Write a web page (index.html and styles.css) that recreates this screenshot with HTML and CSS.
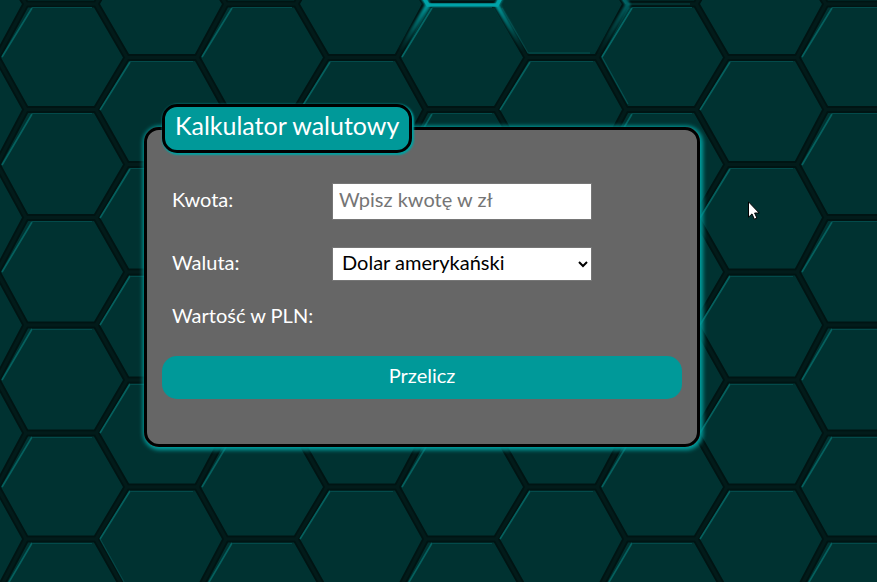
FILE: index.html
```
<!DOCTYPE html>
<html lang="pl">
<head>
<meta charset="utf-8">
<title>Kalkulator walutowy</title>
<link rel="stylesheet" href="styles.css">
</head>
<body>
<svg class="background" viewBox="0 0 877 582" aria-hidden="true">
  <defs>
    <!-- one strip holds an even and an odd column of cells -->
    <pattern id="cells" width="200" height="582" patternUnits="userSpaceOnUse">
      <rect width="200" height="582" fill="#003231"/>
      <g fill="none">
        <path class="groove" d="M26 4H96M26 109.5H96M26 217.5H96M26 325H96M26 433H96M26 539H96
          M127 57.5H197M127 164.5H197M127 272H197M127 380H197M127 487H197
          M-9 -50L26 4L-3 57.5L26 109.5L-3 164.5L26 217.5L-3 272L26 325L-3 380L26 433L-3 487L26 539L-3 594
          M127 -50L96 4L127 57.5L96 109.5L127 164.5L96 217.5L127 272L96 325L127 380L96 433L127 487L96 539L127 594
          M197 -50L226 4L197 57.5L226 109.5L197 164.5L226 217.5L197 272L226 325L197 380L226 433L197 487L226 539L197 594"/>
        <path class="groove-core" d="M26 4H96M26 109.5H96M26 217.5H96M26 325H96M26 433H96M26 539H96
          M127 57.5H197M127 164.5H197M127 272H197M127 380H197M127 487H197
          M-9 -50L26 4L-3 57.5L26 109.5L-3 164.5L26 217.5L-3 272L26 325L-3 380L26 433L-3 487L26 539L-3 594
          M127 -50L96 4L127 57.5L96 109.5L127 164.5L96 217.5L127 272L96 325L127 380L96 433L127 487L96 539L127 594
          M197 -50L226 4L197 57.5L226 109.5L197 164.5L226 217.5L197 272L226 325L197 380L226 433L197 487L226 539L197 594"/>
        <path class="rim" d="M2 57L32 8M2 165L32 114M2 272L32 222M2 380L32 329M2 487L32 437M2 594L32 543
          M100 110L130 62M100 218L130 169M100 325L130 276M100 433L130 384M100 539L130 491"/>
        <path class="rim-top" d="M32 7.5H92M32 113.5H92M32 221.5H92M32 329.5H92M32 437.5H92M32 543.5H92
          M130 61.5H193M130 168.5H193M130 276.5H193M130 384.5H193M130 491.5H193"/>
      </g>
    </pattern>
    <linearGradient id="fade" gradientUnits="userSpaceOnUse" x1="0" y1="0" x2="0" y2="56">
      <stop offset="0.05" stop-color="#00a0a4"/>
      <stop offset="0.5" stop-color="#006c6c" stop-opacity=".75"/>
      <stop offset="0.95" stop-color="#004040" stop-opacity="0"/>
    </linearGradient>
  </defs>
  <rect class="mesh" width="877" height="582" fill="url(#cells)"/>
  <g class="glow" stroke="url(#fade)">
    <path d="M423 -3L428 5L401 50"/>
    <path d="M501 -3L497 5L523 50"/>
    <path class="faint" d="M623 -3L628 5L598 54"/>
  </g>
  <path class="bright" d="M423 -4L428 5H497L502 -4"/>
  <path class="thin" d="M402 57L432 8M502 8L528 53H590M628 4H690M602 57L632 8M602 57L628 104M100 539L124 582M621 -3L626 4"/>
</svg>

<main class="page">
  <form class="calculator">
    <fieldset class="panel">
      <legend class="title">Kalkulator walutowy</legend>
      <div class="row">
        <label class="label" for="amount">Kwota:</label>
        <input class="field" id="amount" type="text" placeholder="Wpisz kwotę w zł">
      </div>
      <div class="row">
        <label class="label" for="currency">Waluta:</label>
        <select class="field select" id="currency"><option>Dolar amerykański</option></select>
      </div>
      <div class="row result"><span class="label">Wartość w PLN:</span></div>
      <button class="submit" type="button">Przelicz</button>
    </fieldset>
  </form>
</main>

<svg class="pointer" viewBox="0 0 12 19" aria-hidden="true">
  <path d="M.5 .8V16.2L4 12.9L6.4 18.2L8.9 17.1L6.6 12H11.2Z"/>
</svg>
</body>
</html>
```
FILE: styles.css
```
* { box-sizing: border-box; }

body {
  margin: 0;
  height: 582px;
  overflow: hidden;
  background: #003231;
  color: #fff;
  font-family: Lato, sans-serif;
  font-size: 20px;
}

.background {
  position: absolute;
  inset: 0;
  width: 877px;
  height: 582px;
}

.mesh { filter: blur(.4px); }
.groove { stroke: #001413; stroke-width: 7; }
.groove-core { stroke: #021b1a; stroke-width: 3; }
.rim { stroke: #04605e; stroke-width: 1.6; }
.rim-top { stroke: #034a4a; stroke-width: 1; }
.glow { fill: none; stroke-width: 5; filter: blur(.8px); }
.faint { opacity: .55; }
.bright { fill: none; stroke: #00a3a8; stroke-width: 3.5; filter: blur(.6px); }
.thin { fill: none; stroke: #07706f; stroke-width: 1.2; opacity: .5; }

.page {
  position: relative;
  padding: 104px 0 0 144px;
}

.calculator { width: 556px; }

.panel {
  position: relative;
  height: 343px;
  margin: 0;
  padding: 30px 15px 0;
  border: 3px solid #000;
  border-radius: 15px;
  background: #666;
  box-shadow: 1px 1px 4px 2px #00a0a0;
}

.title {
  height: 49px;
  width: 250px;
  padding: 2px 0 0 10px;
  border: 3px solid #000;
  border-radius: 15px;
  background: #009999;
  box-shadow: 1px 1px 2px 1px #00a0a0;
  font-size: 25px;
  line-height: 33px;
  white-space: nowrap;
}

.row {
  display: flex;
  align-items: center;
  height: 37px;
  margin-bottom: 27px;
  padding-left: 10px;
}

.row + .row { height: 34px; margin-bottom: 18px; }
.row + .result { margin-bottom: 23px; }
.label { width: 160px; padding-bottom: 5px; white-space: nowrap; }
.row + .result .label { padding-bottom: 3px; }

.field {
  width: 260px;
  height: 37px;
  margin: 0;
  padding: 0 6px 5px;
  border: 1px solid #767676;
  border-radius: 0;
  background-color: #fff;
  color: #000;
  font: inherit;
}

.field::placeholder { color: #757575; }
.select { height: 34px; padding: 0 2px 5px 5px; }

.submit {
  display: block;
  width: 520px;
  height: 43px;
  margin: 0;
  padding: 0 0 5px;
  border: 0;
  border-radius: 15px;
  background: #009999;
  color: #fff;
  font: inherit;
}

.pointer {
  position: absolute;
  left: 748px;
  top: 201px;
  width: 12px;
  height: 19px;
}

.pointer path { fill: #fff; stroke: #000; stroke-width: 1; }
```
